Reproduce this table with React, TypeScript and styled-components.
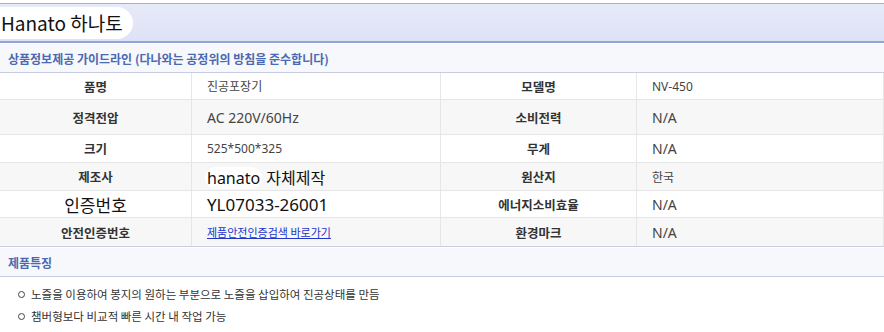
import React from "react";
import styled, { createGlobalStyle } from "styled-components";

const GlobalStyle = createGlobalStyle`
  body {
    margin: 0;
    background: #fff;
    font-family: "Noto Sans", "Noto Sans CJK KR", sans-serif;
  }
`;

const Page = styled.div`
  width: 884px;
  padding-top: 3px;
`;

const TitleBar = styled.div`
  height: 37px;
  border-top: 1px solid #a9b0c6;
  border-bottom: 2px solid #95a2d4;
  background: linear-gradient(#e7eaf8, #dde2f6);
  display: flex;
  align-items: center;
  box-shadow: 0 1px 0 #fff;
`;

const Title = styled.span`
  background: #fff;
  border-radius: 0 16px 16px 0;
  padding: 2px 10px 3px 1px;
  font-size: 19px;
  color: #111;
  font-family: "Noto Sans CJK KR", sans-serif;
`;

const SectionHead = styled.div<{ $h: number }>`
  height: ${(p) => p.$h}px;
  margin-top: 1px;
  background: #f6f8fc;
  border-bottom: 1px solid #c9cde2;
  display: flex;
  align-items: center;
  padding-left: 8px;
  font-size: 12px;
  font-weight: bold;
  color: #4b68b2;
  font-family: "Noto Sans CJK KR", sans-serif;
`;

const Table = styled.div`
  display: grid;
  grid-template-columns: 192px 249px 196px 1fr;
  border-bottom: 1px solid #c9cde2;
`;

const Cell = styled.div<{ $h: number; $alt: boolean; $label?: boolean; $last?: boolean }>`
  height: ${(p) => p.$h}px;
  background: ${(p) => (p.$alt ? "#f7f7f7" : "#fff")};
  border-bottom: ${(p) => (p.$last ? "none" : "1px solid #e6e6e6")};
  border-right: 1px solid #e6e6e6;
  display: flex;
  align-items: center;
  justify-content: ${(p) => (p.$label ? "center" : "flex-start")};
  padding-left: ${(p) => (p.$label ? "0" : "15px")};
  box-sizing: border-box;
  font-family: "Noto Sans CJK KR", sans-serif;
`;

const Label = styled.span<{ $big?: boolean }>`
  font-size: ${(p) => (p.$big ? "17px" : "12.5px")};
  font-weight: ${(p) => (p.$big ? "normal" : "bold")};
  color: ${(p) => (p.$big ? "#111" : "#333")};
`;

const Value = styled.span<{ $size?: number }>`
  font-size: ${(p) => p.$size ?? 12}px;
  color: ${(p) => ((p.$size ?? 12) > 15 ? "#111" : "#444")};
  font-family: "Noto Sans", "Noto Sans CJK KR", sans-serif;
`;

const Highlight = styled.span`
  background: #fff;
  border-radius: 12px;
  padding: 0 2px;
  margin-left: -2px;
`;

const Link = styled.a`
  font-size: 11px;
  color: #2233cc;
  text-decoration: underline;
`;

const List = styled.ul`
  list-style: none;
  margin: 0;
  padding: 6px 0 0 18px;
`;

const Item = styled.li`
  font-size: 11.5px;
  color: #333;
  height: 22px;
  line-height: 22px;
  font-family: "Noto Sans CJK KR", sans-serif;
  &::before {
    content: "";
    display: inline-block;
    width: 5px;
    height: 5px;
    border: 1px solid #444;
    border-radius: 50%;
    margin-right: 6px;
    position: relative;
    top: -1px;
  }
`;

type Row = { h: number; cells: React.ReactNode[] };

const rows: Row[] = [
  { h: 27, cells: [<Label>품명</Label>, <Value>진공포장기</Value>, <Label>모델명</Label>, <Value>NV-450</Value>] },
  { h: 35, cells: [<Label>정격전압</Label>, <Value $size={14}>AC 220V/60Hz</Value>, <Label>소비전력</Label>, <Value $size={14}>N/A</Value>] },
  { h: 28, cells: [<Label>크기</Label>, <Value>525*500*325</Value>, <Label>무게</Label>, <Value $size={14}>N/A</Value>] },
  { h: 28, cells: [<Label>제조사</Label>, <Value $size={16}><Highlight>hanato</Highlight> 자체제작</Value>, <Label>원산지</Label>, <Value>한국</Value>] },
  { h: 27, cells: [<Label $big>인증번호</Label>, <Value $size={17}>YL07033-26001</Value>, <Label>에너지소비효율</Label>, <Value $size={14}>N/A</Value>] },
  { h: 28, cells: [<Label>안전인증번호</Label>, <Link href="#">제품안전인증검색 바로가기</Link>, <Label>환경마크</Label>, <Value $size={14}>N/A</Value>] },
];

export default function App() {
  return (
    <Page>
      <GlobalStyle />
      <TitleBar>
        <Title>Hanato 하나토</Title>
      </TitleBar>
      <SectionHead $h={28}>상품정보제공 가이드라인 (다나와는 공정위의 방침을 준수합니다)</SectionHead>
      <Table>
        {rows.map((row, i) =>
          row.cells.map((c, j) => (
            <Cell
              key={`${i}-${j}`}
              $h={row.h}
              $alt={i % 2 === 1}
              $label={j % 2 === 0}
              $last={i === rows.length - 1}
            >
              {c}
            </Cell>
          ))
        )}
      </Table>
      <SectionHead $h={28}>제품특징</SectionHead>
      <List>
        <Item>노즐을 이용하여 봉지의 원하는 부분으로 노즐을 삽입하여 진공상태를 만듬</Item>
        <Item>챔버형보다 비교적 빠른 시간 내 작업 가능</Item>
      </List>
    </Page>
  );
}
